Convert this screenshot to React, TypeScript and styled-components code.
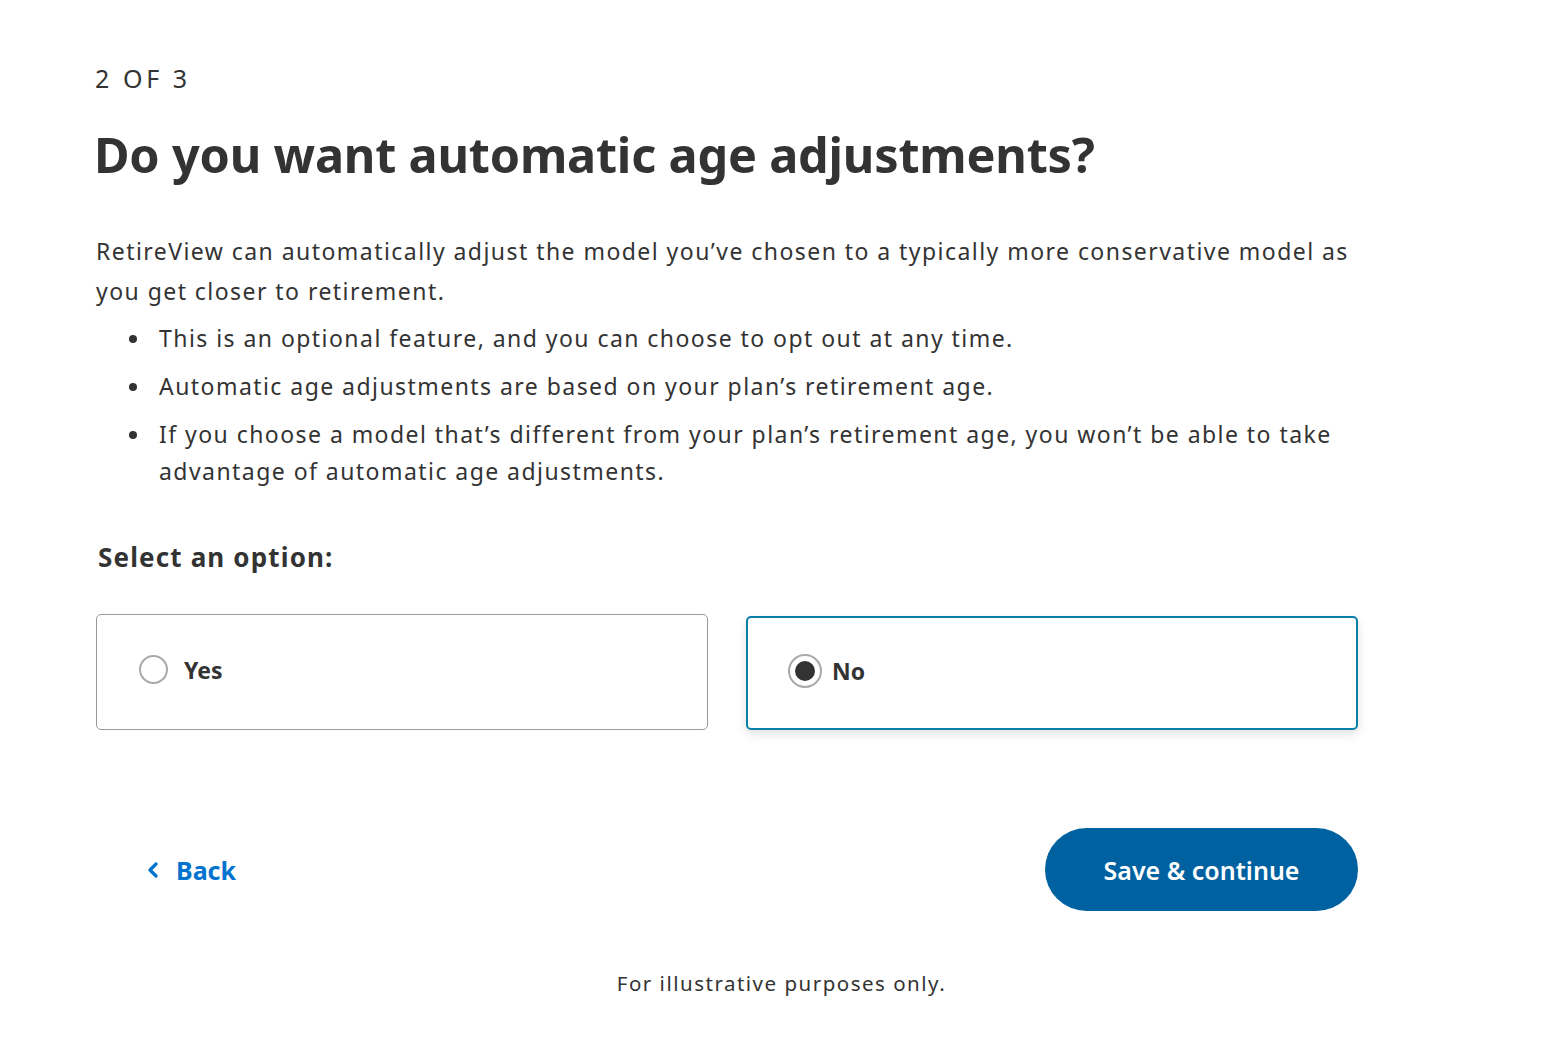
import React, { useState } from 'react';
import styled, { createGlobalStyle } from 'styled-components';

const GlobalStyle = createGlobalStyle`
  html, body {
    margin: 0;
    padding: 0;
    background: #ffffff;
  }
  body {
    font-family: 'Noto Sans', 'Open Sans', sans-serif;
    color: #333333;
  }
`;

const Page = styled.main`
  padding: 61px 0 40px;
`;

const Content = styled.section`
  width: 1263px;
  margin-left: 95px;
`;

const StepLabel = styled.div`
  font-size: 25px;
  letter-spacing: 3.6px;
  color: #333;
  line-height: 34px;
`;

const Title = styled.h1`
  margin: 27px 0 0 -1px;
  font-size: 48.6px;
  font-weight: 700;
  color: #333;
  letter-spacing: -0.2px;
  line-height: 64px;
`;

// body copy: the original face is wider than Noto Sans, so letters are spaced out a little
const Intro = styled.p`
  width: 1280px;
  margin: 45px 0 0 1px;
  font-size: 23px;
  line-height: 40px;
  letter-spacing: 1.45px;
  color: #333;
`;

const BulletList = styled.ul`
  width: 1280px;
  margin: 9px 0 0;
  padding-left: 57px;
  box-sizing: border-box;
  font-size: 23px;
  line-height: 37px;
  letter-spacing: 1.45px;
  color: #333;

  li {
    margin-bottom: 11px;
    padding-left: 7px;
  }
`;

const SectionLabel = styled.h2`
  margin: 50px 0 0 3px;
  font-size: 26px;
  font-weight: 700;
  letter-spacing: 1.15px;
  color: #333;
  line-height: 34px;
`;

const Options = styled.div`
  display: grid;
  grid-template-columns: 612px 612px;
  gap: 38px;
  margin-top: 40px;
  margin-left: 1px;
  align-items: end;
`;

const OptionCard = styled.label<{ $selected: boolean }>`
  display: flex;
  align-items: center;
  gap: 16px;
  height: ${p => (p.$selected ? '114px' : '116px')};
  box-sizing: border-box;
  padding-left: ${p => (p.$selected ? '40px' : '42px')};
  padding-bottom: 5px;
  border: ${p => (p.$selected ? '2px solid #0a80a6' : '1px solid #9a9a9a')};
  border-radius: 5px;
  box-shadow: ${p => (p.$selected ? '0 4px 10px rgba(0,0,0,0.12)' : 'none')};
  cursor: pointer;
  background: #fff;
`;

const Radio = styled.span<{ $selected: boolean }>`
  width: 29px;
  height: 29px;
  box-sizing: border-box;
  border-radius: 50%;
  border: 2px solid #a8a8ad;
  display: flex;
  align-items: center;
  justify-content: center;
  ${p => (p.$selected ? 'width: 34px; height: 34px; margin-right: -6px;' : '')}

  &::after {
    content: '';
    display: ${p => (p.$selected ? 'block' : 'none')};
    width: 20px;
    height: 20px;
    border-radius: 50%;
    background: #333;
  }
`;

const OptionText = styled.span`
  font-size: 23px;
  font-weight: 700;
  color: #333;
`;

const Actions = styled.div`
  display: flex;
  justify-content: space-between;
  align-items: center;
  margin-top: 98px;
  padding-left: 52px;
`;

const BackLink = styled.a`
  display: flex;
  align-items: center;
  gap: 17px;
  font-size: 25px;
  font-weight: 700;
  color: #0073cf;
  text-decoration: none;
  cursor: pointer;
`;

const PrimaryButton = styled.button`
  width: 313px;
  height: 83px;
  border: none;
  border-radius: 42px;
  background: #0061a0;
  color: #fff;
  font-family: 'Noto Sans', 'Open Sans', sans-serif;
  font-size: 25px;
  font-weight: 600;
  cursor: pointer;
`;

const Disclaimer = styled.p`
  margin: 57px 0 0;
  text-align: center;
  font-size: 20.5px;
  letter-spacing: 1.5px;
  color: #333;
  line-height: 30px;
`;

const App: React.FC = () => {
  const [choice, setChoice] = useState<'yes' | 'no'>('no');

  return (
    <>
      <GlobalStyle />
      <Page>
        <Content>
          <StepLabel>2 OF 3</StepLabel>
          <Title>Do you want automatic age adjustments?</Title>
          <Intro>
            RetireView can automatically adjust the model you’ve chosen to a typically more conservative model as
            you get closer to retirement.
          </Intro>
          <BulletList>
            <li>This is an optional feature, and you can choose to opt out at any time.</li>
            <li>Automatic age adjustments are based on your plan’s retirement age.</li>
            <li>
              If you choose a model that’s different from your plan’s retirement age, you won’t be able to take
              advantage of automatic age adjustments.
            </li>
          </BulletList>

          <SectionLabel>Select an option:</SectionLabel>
          <Options>
            <OptionCard $selected={choice === 'yes'} onClick={() => setChoice('yes')}>
              <Radio $selected={choice === 'yes'} />
              <OptionText>Yes</OptionText>
            </OptionCard>
            <OptionCard $selected={choice === 'no'} onClick={() => setChoice('no')}>
              <Radio $selected={choice === 'no'} />
              <OptionText>No</OptionText>
            </OptionCard>
          </Options>

          <Actions>
            <BackLink>
              <svg width="12" height="16" viewBox="0 0 12 16">
                <path d="M9 2 L3 8 L9 14" fill="none" stroke="#0073cf" strokeWidth="3.2" strokeLinecap="round" strokeLinejoin="round" />
              </svg>
              Back
            </BackLink>
            <PrimaryButton>Save &amp; continue</PrimaryButton>
          </Actions>
        </Content>

        <Disclaimer>For illustrative purposes only.</Disclaimer>
      </Page>
    </>
  );
};

export default App;
